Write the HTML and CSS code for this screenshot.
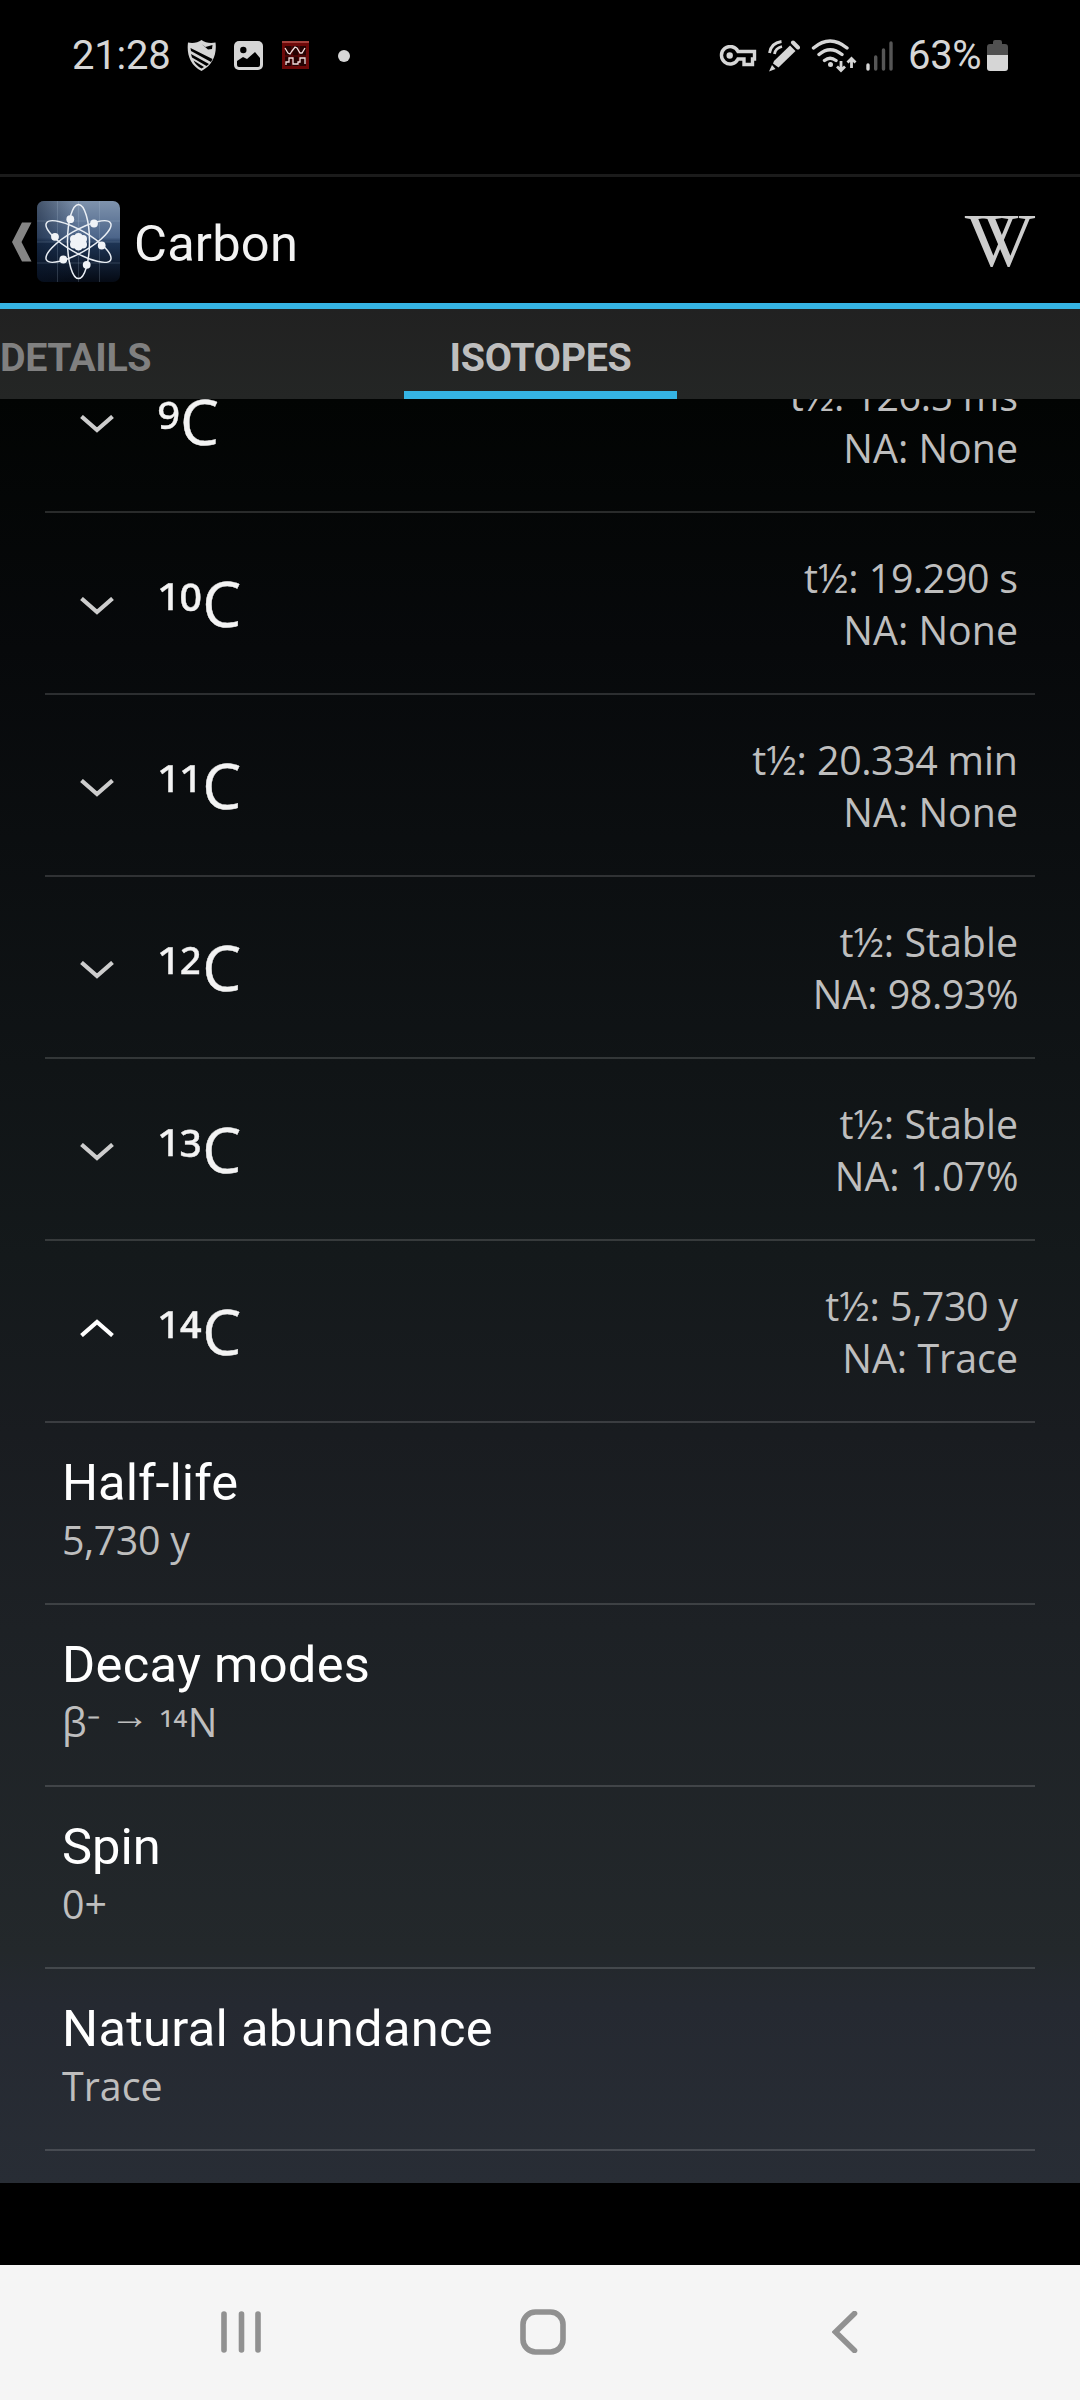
FILE: index.html
```html
<!DOCTYPE html>
<html lang="en">
<head>
<meta charset="utf-8">
<title>Carbon</title>
<link rel="stylesheet" href="styles.css">
</head>
<body>
<div class="screen">
  <div class="status">
    <span class="clock">21:28</span>
    <svg class="st-shield" width="30" height="32" viewBox="0 0 30 32"><path d="M1 2.500C5 3.500 11 3 14.500 0 18 3 24 3.500 28.500 2.500 30 14 26 25 14.500 31 3 25-.5 14 1 2.500Z" fill="#d6d6d6"/><path d="M14.500 4l4 3 7-2-.5 4-4 .5Z M3.500 8L25.500 19l-1.500 3L4 11Z M4 14L22 24l-2.500 2L5 17.500Z M6.500 20.500L17 27l-2.500 1.500C11 26.500 8 24 6.500 20.500Z" fill="#000"/></svg>
    <svg class="st-image" width="30" height="30" viewBox="0 0 30 30"><rect x="0" y="0" width="29" height="29" rx="5" fill="#d6d6d6"/><circle cx="9.300" cy="9" r="3.200" fill="#000"/><path d="M3 24v-4l6-4 4 2 8-7 5 6v7q0 2-2 2H5q-2 0-2-2Z" fill="#000"/></svg>
    <svg class="st-scope" width="28" height="29" viewBox="0 0 28 29"><rect width="27" height="28" fill="#6d0808"/><rect width="27" height="2" fill="#a3403c"/><rect x="3" y="5" width="21" height="20" fill="#250303"/><path d="M10 5v20M17 5v20M3 15h21" stroke="#6d0808"/><path d="M3 7l3 5 2 1 2-3 3-4 2 1 3 5 2 0 3-5M4 24v-3h3v-4h4v6h5v-2h2v-4h5v6" fill="none" stroke="#f2dede" stroke-width="1.300"/></svg>
    <span class="st-dot"></span>
    <svg class="st-key" width="38" height="22" viewBox="0 0 38 22"><path d="M19 6.500H35.500V14H33.500V19.500H25V14H19A8.700 8.700 0 1 1 19 6.500Z" fill="none" stroke="#d6d6d6" stroke-width="3.400"/><circle cx="10.700" cy="10.500" r="3.200" fill="#d6d6d6"/></svg>
    <svg class="st-pen" width="32" height="32" viewBox="0 0 32 32"><path d="M22 5.500l5.500 5.500L10.500 27.500 5 23.500 6 21Z" fill="#d6d6d6"/><path d="M4 25l3.500 4L1 31.500Z" fill="#d6d6d6"/><path d="M25 2.500l5 5" stroke="#d6d6d6" stroke-width="4" stroke-linecap="round"/><path d="M1.500 13Q3 3 13.500 1.500M6.500 14Q7.500 8 14 6.500" fill="none" stroke="#d6d6d6" stroke-width="2.800"/></svg>
    <svg class="st-wifi" width="46" height="34" viewBox="0 0 46 34"><g fill="none" stroke="#d6d6d6" stroke-width="3.400" stroke-linecap="round"><path d="M2.500 9Q19-5 36 9M8 15.500Q19 6 31 15.500M13.500 21.500Q19 17 25 21.500"/><path d="M30 22v9.500m-4-4l4 4 4-4M40.500 29V19.500m-4 4l4-4 4 4" stroke-width="2.800" stroke-linecap="butt"/></g><circle cx="19.500" cy="25.500" r="2.500" fill="#d6d6d6"/></svg>
    <svg class="st-signal" width="28" height="30" viewBox="0 0 28 30"><g stroke-width="3.400" stroke-linecap="round"><path d="M2 24v4" stroke="#d6d6d6"/><path d="M9.700 16v12M17.500 9v19M25 2v26" stroke="#565656"/></g></svg>
    <span class="percent">63%</span>
    <svg class="st-battery" width="22" height="32" viewBox="0 0 22 32"><path d="M0 7q0-3 3-3h3V2q0-2 2-2h5q2 0 2 2v2h3q3 0 3 3v8H0Z" fill="#505050"/><path d="M0 15h21v13q0 3-3 3H3q-3 0-3-3Z" fill="#d6d6d6"/></svg>
  </div>

  <header class="appbar">
    <svg class="up" width="20" height="40" viewBox="0 0 20 40"><path d="M10 0.500H19.500L9.500 20 19.500 39.500H10L0 20Z" fill="#858585"/></svg>
    <svg class="logo" width="83" height="82" viewBox="0 0 83 82">
      <defs>
        <linearGradient id="sky" x1="0" y1="0" x2="0" y2="1"><stop offset="0" stop-color="#7f93ad"/><stop offset=".45" stop-color="#4c658a"/><stop offset=".52" stop-color="#1d3454"/><stop offset="1" stop-color="#050a14"/></linearGradient>
        <linearGradient id="shade" x1="0" y1="0" x2="1" y2="0"><stop offset="0" stop-color="#081428" stop-opacity=".5"/><stop offset=".5" stop-color="#081428" stop-opacity="0"/></linearGradient>
      </defs>
      <rect width="83" height="81" rx="7" fill="url(#sky)"/><rect width="83" height="81" rx="7" fill="url(#shade)"/>
      <path d="M20.500 0v81M41.500 0v81M62.500 0v81M0 20h83M0 41h83M0 62h83" stroke="#b9cbe2" stroke-opacity=".2"/>
      <g fill="none" stroke="#e9eef4" stroke-width="1.500"><ellipse cx="41.500" cy="40.500" rx="11" ry="37"/><ellipse cx="41.500" cy="40.500" rx="11" ry="37" transform="rotate(60 41.500 40.500)"/><ellipse cx="41.500" cy="40.500" rx="11" ry="37" transform="rotate(-60 41.500 40.500)"/></g>
      <g fill="#f0f3f7"><circle cx="33.300" cy="18.200" r="3.900"/><circle cx="57" cy="22.500" r="3.900"/><circle cx="64.700" cy="44.500" r="3.900"/><circle cx="49.700" cy="63.800" r="3.900"/><circle cx="26.300" cy="58.500" r="3.900"/><circle cx="18" cy="35.800" r="3.900"/><circle cx="41.500" cy="36" r="4"/><circle cx="46" cy="38" r="4"/><circle cx="37" cy="38" r="4"/><circle cx="37" cy="43.500" r="4"/><circle cx="46" cy="43.500" r="4"/><circle cx="41.500" cy="45.500" r="4"/><circle cx="41.500" cy="41" r="5"/></g>
    </svg>
    <h1 class="title">Carbon</h1>
    <span class="wiki">VV</span>
  </header>

  <nav class="tabs">
    <span class="tab">DETAILS</span>
    <span class="tab active">ISOTOPES</span>
  </nav>

  <main class="viewport">
    <div class="list">
      <div class="row iso"><svg class="chev" viewBox="0 0 34 18"><path d="M1.500 1.500L17 15 32.500 1.500"/></svg><span class="sym"><span class="mass">⁹</span>C</span><div class="info">t½: <span class="num">126.5</span> ms<br>NA: None</div></div>
      <div class="row iso"><svg class="chev" viewBox="0 0 34 18"><path d="M1.500 1.500L17 15 32.500 1.500"/></svg><span class="sym"><span class="mass">¹⁰</span>C</span><div class="info">t½: <span class="num">19.290</span> s<br>NA: None</div></div>
      <div class="row iso"><svg class="chev" viewBox="0 0 34 18"><path d="M1.500 1.500L17 15 32.500 1.500"/></svg><span class="sym"><span class="mass">¹¹</span>C</span><div class="info">t½: <span class="num">20.334</span> min<br>NA: None</div></div>
      <div class="row iso"><svg class="chev" viewBox="0 0 34 18"><path d="M1.500 1.500L17 15 32.500 1.500"/></svg><span class="sym"><span class="mass">¹²</span>C</span><div class="info">t½: Stable<br>NA: <span class="num">98.93%</span></div></div>
      <div class="row iso"><svg class="chev" viewBox="0 0 34 18"><path d="M1.500 1.500L17 15 32.500 1.500"/></svg><span class="sym"><span class="mass">¹³</span>C</span><div class="info">t½: Stable<br>NA: <span class="num">1.07%</span></div></div>
      <div class="row iso open"><svg class="chev" viewBox="0 0 34 18"><path d="M1.500 16.500L17 3 32.500 16.500"/></svg><span class="sym"><span class="mass">¹⁴</span>C</span><div class="info">t½: <span class="num">5,730</span> y<br>NA: Trace</div></div>
      <div class="row prop"><div class="name tight">Half-life</div><div class="value"><span class="num">5,730</span> y</div></div>
      <div class="row prop"><div class="name">Decay modes</div><div class="value">β<span class="charge">⁻</span> <span class="arrow">→</span> <span class="nuc">¹⁴</span>N</div></div>
      <div class="row prop"><div class="name tight">Spin</div><div class="value">0+</div></div>
      <div class="row prop"><div class="name">Natural abundance</div><div class="value">Trace</div></div>
    </div>
  </main>

  <footer class="sysnav">
    <svg class="recents" width="42" height="42" viewBox="0 0 42 42"><path d="M3 3v36M20.500 3v36M37 3v36"/></svg>
    <svg class="home" width="46" height="46" viewBox="0 0 46 46"><rect x="3" y="3" width="40" height="40" rx="12.500"/></svg>
    <svg class="back" width="26" height="42" viewBox="0 0 26 42"><path d="M22.500 2.500L3.500 21 22.500 39.500"/></svg>
  </footer>
</div>
</body>
</html>
```

FILE: styles.css
```css
* { box-sizing: border-box; }
body { margin: 0; background: #000; }
svg { display: block; flex: none; }

.screen {
  width: 1080px;
  height: 2400px;
  display: flex;
  flex-direction: column;
  overflow: hidden;
  background: #000;
  font-family: Roboto, sans-serif;
}

/* status bar */
.status {
  height: 174px;
  flex: none;
  padding: 0 71px 63px 72px;
  display: flex;
  align-items: center;
  font-size: 40px;
  line-height: 48px;
  color: #d6d6d6;
}
.clock { width: 100px; letter-spacing: -0.2px; }
.st-shield { margin-left: 15px; }
.st-image { margin-left: 17px; }
.st-scope { margin-left: 18px; }
.st-dot { width: 12px; height: 12px; border-radius: 6px; background: #d6d6d6; margin-left: 28px; }
.st-key { margin-left: auto; }
.st-pen { margin-left: 11px; }
.st-wifi { margin-left: 11px; }
.st-signal { margin-left: 9px; }
.percent { margin-left: 14px; width: 74px; letter-spacing: -0.3px; }
.st-battery { margin-left: 5px; }

/* action bar */
.appbar {
  height: 135px;
  flex: none;
  display: flex;
  align-items: center;
  padding-left: 12px;
  border-top: 3px solid #1b1b1b;
  border-bottom: 6px solid #35b3e3;
}
.up { margin-top: 3px; }
.logo { margin: 3px 0 0 5px; }
.title {
  margin: 8px 0 0 14px;
  font-size: 50.625px;
  line-height: 60px;
  font-weight: 400;
  letter-spacing: 0.2px;
  color: #f3f3f3;
}
.wiki {
  width: 70px;
  margin-left: auto;
  margin-right: 46px;
  font: 76px/80px "Liberation Serif", serif;
  letter-spacing: -38px;
  color: #cdcdcd;
}

/* tabs */
.tabs {
  height: 90px;
  flex: none;
  display: flex;
  background: linear-gradient(#212121, #242625);
  font-size: 39.375px;
  line-height: 46px;
  font-weight: 700;
  letter-spacing: -0.4px;
}
.tab { padding-top: 26px; color: #808080; width: 404px; }
.tab.active {
  width: 273px;
  text-align: center;
  color: #bebebe;
  letter-spacing: -0.3px;
  border-bottom: 8px solid #35b3e3;
}

/* list */
.viewport {
  height: 1784px;
  flex: none;
  overflow: hidden;
  background: linear-gradient(#020403, #07090b 14%, #14191b 48%, #191c20 58%, #1d2125 69%, #23282b 87%, #252931 90%, #282d35);
}
.list { margin: -68px 45px 0; font-family: "Open Sans", sans-serif; }
.row { height: 182px; border-bottom: 2px solid rgba(255, 255, 255, 0.15); }
.iso { display: flex; align-items: center; padding: 0 17px 0 35px; }
.chev { width: 34px; height: 18px; margin-top: 5px; fill: none; stroke: #cdcdcd; stroke-width: 4.2; }
.open .chev { stroke: #fff; margin-top: -6px; }
.sym { margin-left: 44px; font-size: 61.875px; line-height: 82px; color: #f3f3f3; -webkit-text-stroke: 0.4px #f3f3f3; }
.mass { line-height: 0; vertical-align: -9px; letter-spacing: 0.6px; }
.info { margin-left: auto; padding-top: 1px; text-align: right; font-size: 39.375px; line-height: 52px; color: #bebebe; }
.num { letter-spacing: -0.45px; }
.prop { padding: 30px 0 0 17px; }
.name { font: 50.625px/60px Roboto, sans-serif; letter-spacing: 0.3px; color: #fff; }
.name.tight { letter-spacing: 0; }
.value { margin-top: 1px; font-size: 39.375px; line-height: 52px; color: #bebebe; }
.charge { line-height: 0; vertical-align: -4px; }
.arrow { line-height: 0; vertical-align: 8px; }
.nuc { line-height: 0; vertical-align: -6px; letter-spacing: 0.4px; }

/* navigation bar */
.sysnav {
  height: 135px;
  flex: none;
  margin-top: 82px;
  padding: 0 0 1px 221px;
  display: flex;
  align-items: center;
  background: #f5f5f5;
}
.sysnav svg { fill: none; stroke: #919191; stroke-width: 5.6; stroke-linecap: round; }
.home { margin-left: 257px; }
.back { margin-left: 266px; }
```
